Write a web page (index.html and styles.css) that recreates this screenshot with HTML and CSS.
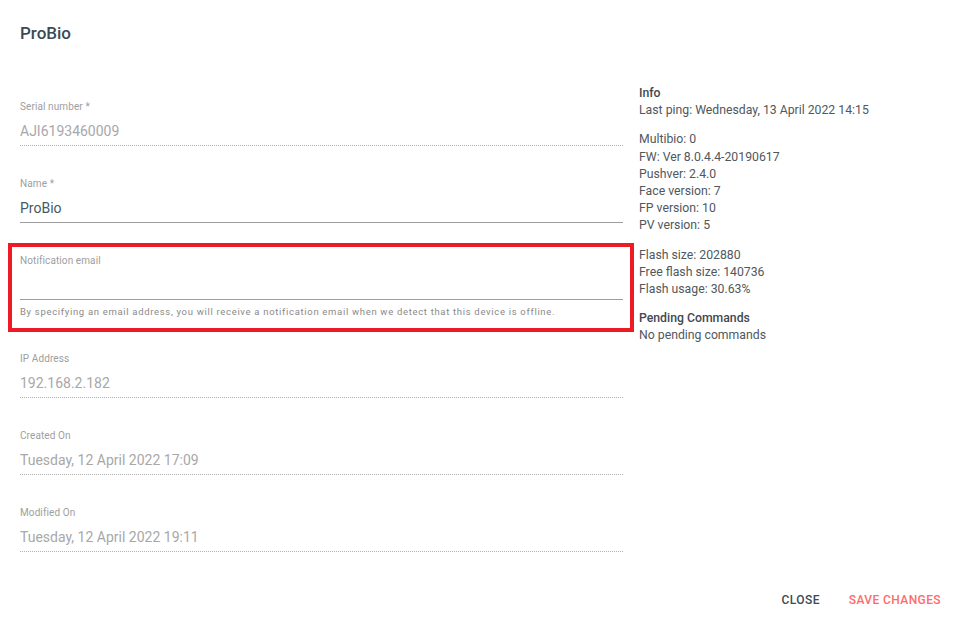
FILE: index.html
```html
<!Doctype html>
<html>
<head>
<title>ProBio</title>
<link rel="stylesheet" href="styles.css">
</head>
<body>
<div class="dialog">
	<h2 class="dialog-title">ProBio</h2>

	<div class="dialog-body">
		<!-- form fields -->
		<div class="form-col">
			<div class="field disabled">
				<label class="field-label">Serial number *</label>
				<div class="field-value">AJI6193460009</div>
			</div>
			<div class="field">
				<label class="field-label">Name *</label>
				<div class="field-value">ProBio</div>
			</div>
			<div class="field field-marked">
				<label class="field-label">Notification email</label>
				<div class="field-value"></div>
				<div class="field-hint">By specifying an email address, you will receive a notification email when we detect that this device is offline.</div>
			</div>
			<div class="field disabled">
				<label class="field-label">IP Address</label>
				<div class="field-value">192.168.2.182</div>
			</div>
			<div class="field disabled">
				<label class="field-label">Created On</label>
				<div class="field-value">Tuesday, 12 April 2022 17:09</div>
			</div>
			<div class="field disabled">
				<label class="field-label">Modified On</label>
				<div class="field-value">Tuesday, 12 April 2022 19:11</div>
			</div>
		</div>

		<!-- device info -->
		<div class="info-col">
			<div class="info-block">
				<div class="info-head">Info</div>
				<div>Last ping: Wednesday, 13 April 2022 14:15</div>
			</div>
			<div class="info-block">
				<div>Multibio: 0</div>
				<div>FW: Ver 8.0.4.4-20190617</div>
				<div>Pushver: 2.4.0</div>
				<div>Face version: 7</div>
				<div>FP version: 10</div>
				<div>PV version: 5</div>
			</div>
			<div class="info-block">
				<div>Flash size: 202880</div>
				<div>Free flash size: 140736</div>
				<div>Flash usage: 30.63%</div>
			</div>
			<div class="info-block">
				<div class="info-head">Pending Commands</div>
				<div>No pending commands</div>
			</div>
		</div>
	</div>

	<div class="dialog-actions">
		<button class="bttn" type="button">Close</button>
		<button class="bttn bttn-primary" type="button">Save changes</button>
	</div>
</div>
</body>
</html>
```

FILE: styles.css
```css
body {margin: 0;background: #fff;font-family: Roboto, "Liberation Sans", sans-serif;}
.dialog {width: 955px;height: 624px;box-sizing: border-box;}
.dialog-title {margin: 0;padding: 23px 20px 0;font-size: 17px;line-height: 20px;font-weight: 500;color: #3b4a54;}

.dialog-body {display: flex;gap: 16px;margin-top: 42px;padding: 0 20px;}
.form-col {width: 603px;padding-top: 16px;}
.info-col {flex: 1;font-size: 12.25px;line-height: 17.2px;color: #50585e;}

.field {margin-bottom: 32px;}
.field-label {display: block;font-size: 10px;line-height: 12px;color: #9e9e9e;letter-spacing: 0.1px;}
.field-value {margin-top: 8px;height: 20px;line-height: 20px;font-size: 14px;color: #455a64;padding-bottom: 4px;border-bottom: 1px solid #9e9e9e;}
.field.disabled .field-value {color: #a8a8a8;border-bottom: 1px dotted #b0b0b0;}
.field-hint {margin-top: 6px;font-size: 9.5px;line-height: 11px;letter-spacing: 0.68px;color: #8a8a8a;}
.field-marked {position: relative;margin-bottom: 36px;}
.field-marked::after {content: "";position: absolute;left: -12px;right: -11px;top: -12px;bottom: -15px;border: 4px solid #ed1c24;}

.info-block {margin-bottom: 12px;}
.info-head {font-weight: 500;color: #3f4850;}

.dialog-actions {display: flex;justify-content: flex-end;padding: 0;margin-top: -2px;}
.bttn {font-family: Roboto, "Liberation Sans", sans-serif;font-size: 12px;font-weight: 500;text-transform: uppercase;letter-spacing: 0.4px;line-height: 20px;padding: 8px 14px;margin-left: 1px;border: 0;background: transparent;color: #3b4a54;}
.bttn-primary {color: #ff6b6b;}
```
